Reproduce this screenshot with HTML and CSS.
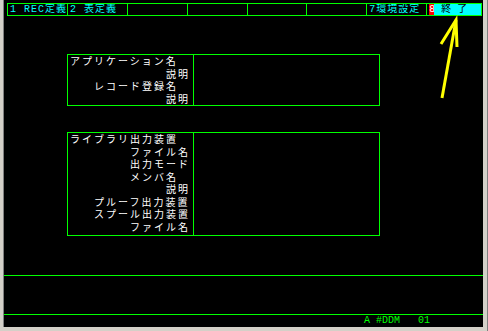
FILE: index.html
```html
<!DOCTYPE html>
<html lang="ja">
<head>
    <meta charset="UTF-8">
    <title>DDM</title>
    <link rel="stylesheet" href="styles.css">
</head>
<body>
    <div class="frame">
        <div class="screen">
            <div class="menu">
                <div class="cell">1 REC定義</div>
                <div class="cell">2 表定義</div>
                <div class="cell"></div>
                <div class="cell"></div>
                <div class="cell"></div>
                <div class="cell"></div>
                <div class="cell">7環境設定</div>
                <div class="cell last"><span class="num">8</span><span class="exit">終 了</span></div>
            </div>

            <div class="panel p1">
                <div class="labels">
                    <div class="label">アプリケーション名</div>
                    <div class="label">　　　　　　　　説明</div>
                    <div class="label">　　レコード登録名　</div>
                    <div class="label">　　　　　　　　説明</div>
                </div>
                <div class="values"></div>
            </div>

            <div class="panel p2">
                <div class="labels">
                    <div class="label">ライブラリ出力装置</div>
                    <div class="label">　　　　　ファイル名</div>
                    <div class="label">　　　　　出力モード</div>
                    <div class="label">　　　　　メンバ名　</div>
                    <div class="label">　　　　　　　　説明</div>
                    <div class="label">　　プルーフ出力装置</div>
                    <div class="label">　　スプール出力装置</div>
                    <div class="label">　　　　　ファイル名</div>
                </div>
                <div class="values"></div>
            </div>

            <div class="message"></div>
            <div class="status">A #DDM   01</div>
        </div>

        <svg class="arrow" width="488" height="331" viewBox="0 0 488 331">
            <polyline points="441,44 456,20 457,47" fill="none" stroke="#ffff00" stroke-width="3"/>
            <line x1="456" y1="20" x2="442" y2="98" stroke="#ffff00" stroke-width="3"/>
        </svg>
    </div>
</body>
</html>
```

FILE: styles.css
```css
body {
    margin: 0;
    background: #d4d0c8;
}

.frame {
    position: relative;
    width: 488px;
    height: 331px;
    box-sizing: border-box;
    padding: 0 4px 4px 3px;
    border-right: 1px solid #808080;
    background: #d4d0c8;
}

.screen {
    height: 327px;
    background: #000;
    border-left: 1px solid #808080;
    display: flex;
    flex-direction: column;
}

.menu {
    display: flex;
    margin: 3px 0 0 3px;
    width: 475px;
    height: 13px;
    flex-shrink: 0;
    box-sizing: border-box;
    border: 1px solid #00ff00;
    border-right: none;
    font-family: "Liberation Mono", "Noto Sans CJK JP", monospace;
    font-size: 10px;
    letter-spacing: 1px;
    line-height: 11px;
    color: #00ffff;
}

.cell {
    width: 60px;
    box-sizing: border-box;
    padding-left: 2px;
    border-right: 1px solid #00ff00;
    white-space: pre;
    overflow: hidden;
}

.cell.last {
    width: 55px;
    display: flex;
}

.num {
    width: 5px;
    overflow: hidden;
    background: #ff0000;
    color: #fff;
    letter-spacing: 0;
}

.exit {
    flex: 1;
    background: #00ffff;
    color: #000;
    padding-left: 7px;
    letter-spacing: 0;
}

.panel {
    display: flex;
    flex-shrink: 0;
    width: 313px;
    margin-left: 63px;
    box-sizing: border-box;
    border: 1px solid #00ff00;
}

.p1 {
    margin-top: 38px;
}

.p2 {
    margin-top: 26px;
}

.labels {
    width: 126px;
    box-sizing: border-box;
    padding: 0 3px 0 2px;
    border-right: 1px solid #00ff00;
    font-family: "Noto Sans CJK JP", sans-serif;
    font-size: 10px;
    letter-spacing: 2px;
    color: #fff;
}

.label {
    height: 12.5px;
    line-height: 12.5px;
    white-space: pre;
}

.p2 .labels {
    padding-bottom: 2px;
}

.values {
    flex: 1;
}

.message {
    flex-shrink: 0;
    margin-top: 39px;
    height: 39px;
    box-sizing: border-box;
    border-top: 1px solid #00ff00;
}

.status {
    flex-shrink: 0;
    height: 13px;
    box-sizing: border-box;
    padding-left: 360px;
    border-top: 1px solid #00ff00;
    font-family: "Liberation Mono", monospace;
    font-size: 10px;
    line-height: 12px;
    color: #00ff00;
    white-space: pre;
}

.arrow {
    position: absolute;
    left: 0;
    top: 0;
    pointer-events: none;
}
```
